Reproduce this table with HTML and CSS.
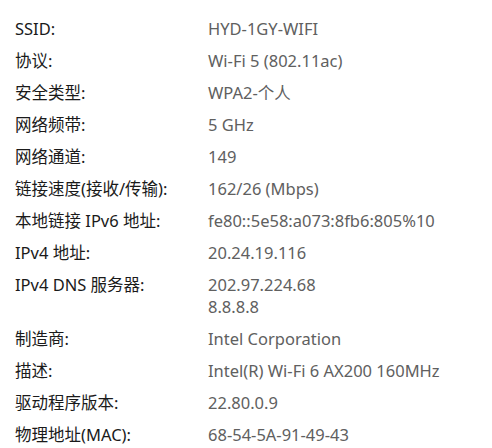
FILE: index.html
```html
<!DOCTYPE html>
<html lang="zh-CN">
<head>
<meta charset="utf-8">
<link rel="stylesheet" href="styles.css">
</head>
<body>
<div class="props">
  <div class="k">SSID:</div><div class="v">HYD-1GY-WIFI</div>
  <div class="k">协议:</div><div class="v">Wi-Fi 5 (802.11ac)</div>
  <div class="k">安全类型:</div><div class="v">WPA2-个人</div>
  <div class="k">网络频带:</div><div class="v">5 GHz</div>
  <div class="k">网络通道:</div><div class="v">149</div>
  <div class="k">链接速度(接收/传输):</div><div class="v">162/26 (Mbps)</div>
  <div class="k">本地链接 IPv6 地址:</div><div class="v">fe80::5e58:a073:8fb6:805%10</div>
  <div class="k">IPv4 地址:</div><div class="v">20.24.19.116</div>
  <div class="k">IPv4 DNS 服务器:</div><div class="v">202.97.224.68<br>8.8.8.8</div>
  <div class="k">制造商:</div><div class="v">Intel Corporation</div>
  <div class="k">描述:</div><div class="v">Intel(R) Wi-Fi 6 AX200 160MHz</div>
  <div class="k">驱动程序版本:</div><div class="v">22.80.0.9</div>
  <div class="k">物理地址(MAC):</div><div class="v">68-54-5A-91-49-43</div>
</div>
</body>
</html>
```
FILE: styles.css
```css
html, body {
  margin: 0;
  padding: 0;
  background: #ffffff;
}
body {
  width: 492px;
  height: 448px;
  overflow: hidden;
  font-family: "Noto Sans", "Noto Sans CJK SC", sans-serif;
  font-size: 16.5px;
  line-height: 22px;
}
.props {
  display: grid;
  grid-template-columns: 193px 1fr;
  row-gap: 10px;
  padding: 18px 0 0 15px;
}
.k {
  color: #1a1a1a;
  white-space: nowrap;
}
.v {
  color: #606060;
  white-space: nowrap;
}
```
